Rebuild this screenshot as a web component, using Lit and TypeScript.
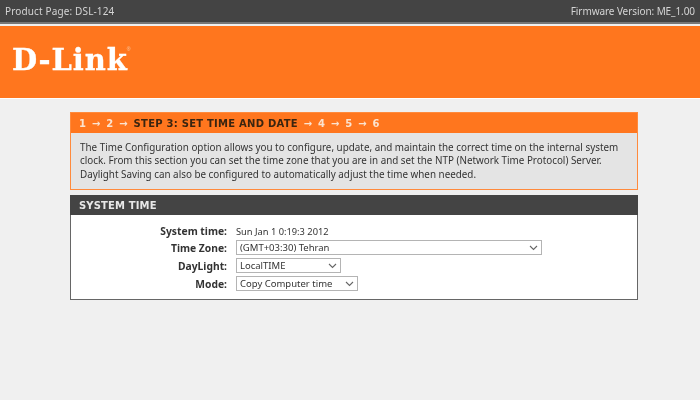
import { LitElement, html, css } from "lit";
import { customElement } from "lit/decorators.js";

@customElement("app-root")
export class AppRoot extends LitElement {
  static styles = css`
    :host { display: block; width: 700px; height: 400px; background: #f0f0f0; overflow: hidden; font-family: "Noto Sans", "DejaVu Sans", sans-serif; color: #333; filter: blur(0.3px); }
    .top { height: 22px; background: #444; color: #d4d4d4; display: flex; justify-content: space-between; align-items: center; padding: 0 5px; font-size: 10px; border-bottom: 2px solid #777; }
    .top .pp { letter-spacing: 0.14px; }
    .top .fw { letter-spacing: -0.08px; }
    .band { margin-top: 2px; height: 72px; background: #ff761e; border-bottom: 1px solid #fff; display: flex; align-items: center; padding-left: 12px; }
    .logo { font-family: "DejaVu Serif", "Liberation Serif", serif; font-weight: 700; font-size: 29px; color: #fff; letter-spacing: 0.9px; line-height: 1; display: flex; margin-top: -4px; -webkit-text-stroke: 0.3px #fff; }
    .logo sup { font-family: "Liberation Sans", sans-serif; font-size: 5px; font-weight: 400; color: #f8d0b0; margin: 0 0 0 -1px; line-height: 6px; -webkit-text-stroke: 0; }
    main { width: 568px; margin: 13px 0 0 70px; display: flex; flex-direction: column; gap: 5px; }
    .wizard { border: 1px solid #ff8a3c; background: #e4e4e4; }
    .wizard h1 { margin: 0; height: 20px; background: #ff761e; color: #fbe3d0; font-family: "DejaVu Sans", sans-serif; font-size: 10px; font-weight: 700; letter-spacing: 0.25px; word-spacing: 2px; display: flex; align-items: center; padding-left: 8px; white-space: pre; }
    .wizard h1 b { color: #3a2510; word-spacing: 0; }
    .wizard p { margin: 0; padding: 8px 9px 0; font-size: 9.85px; line-height: 13.3px; height: 56px; box-sizing: border-box; white-space: nowrap; }
    .panel { border: 1px solid #666; background: #fff; border-top: none; }
    .panel h2 { margin: 0 -1px; height: 20px; background: #444; color: #e8e8e8; font-family: "DejaVu Sans", sans-serif; font-size: 10px; font-weight: 700; letter-spacing: 0.15px; display: flex; align-items: center; padding-left: 9px; }
    .rows { display: grid; grid-template-columns: 156px 1fr; grid-template-rows: 12px 15px 15px 15px; column-gap: 9px; row-gap: 3px; padding: 10px 0 8px; align-items: center; }
    .rows label { text-align: right; font-weight: 700; font-size: 10.3px; line-height: 14px; color: #333; }
    .value { font-size: 9.3px; height: 12px; line-height: 14px; }
    .sel { position: relative; height: 15px; }
    .sel svg { position: absolute; right: 4px; top: 5px; width: 9px; height: 6px; pointer-events: none; }
    .sel path { fill: none; stroke: #666; stroke-width: 1.1; }
    select { appearance: none; -webkit-appearance: none; display: block; width: 100%; box-sizing: border-box; font-family: "Noto Sans", sans-serif; font-size: 9.5px; height: 15px; padding: 0 0 0 3px; border: 1px solid #b4b4b4; background: #fff; color: #333; border-radius: 0; }
    .tz { width: 306px; }
    .dl { width: 105px; }
    .mode { width: 122px; }
  `;

  private chevron() {
    return html`<svg viewBox="0 0 9 6"><path d="M1 1l3.5 3.5L8 1"></path></svg>`;
  }

  render() {
    return html`
      <div class="top"><span class="pp">Product Page: DSL-124</span><span class="fw">Firmware Version: ME_1.00</span></div>
      <div class="band"><div class="logo">D-Link<sup>®</sup></div></div>
      <main>
        <section class="wizard">
          <h1>1 → 2 → <b>STEP 3: SET TIME AND DATE</b> → 4 → 5 → 6</h1>
          <p>The Time Configuration option allows you to configure, update, and maintain the correct time on the internal system<br>clock. From this section you can set the time zone that you are in and set the NTP (Network Time Protocol) Server.<br>Daylight Saving can also be configured to automatically adjust the time when needed.</p>
        </section>
        <section class="panel">
          <h2>SYSTEM TIME</h2>
          <div class="rows">
            <label>System time:</label><div class="value">Sun Jan 1 0:19:3 2012</div>
            <label>Time Zone:</label><div class="sel tz"><select><option>(GMT+03:30) Tehran</option></select>${this.chevron()}</div>
            <label>DayLight:</label><div class="sel dl"><select><option>LocalTIME</option></select>${this.chevron()}</div>
            <label>Mode:</label><div class="sel mode"><select><option>Copy Computer time</option></select>${this.chevron()}</div>
          </div>
        </section>
      </main>
    `;
  }
}
